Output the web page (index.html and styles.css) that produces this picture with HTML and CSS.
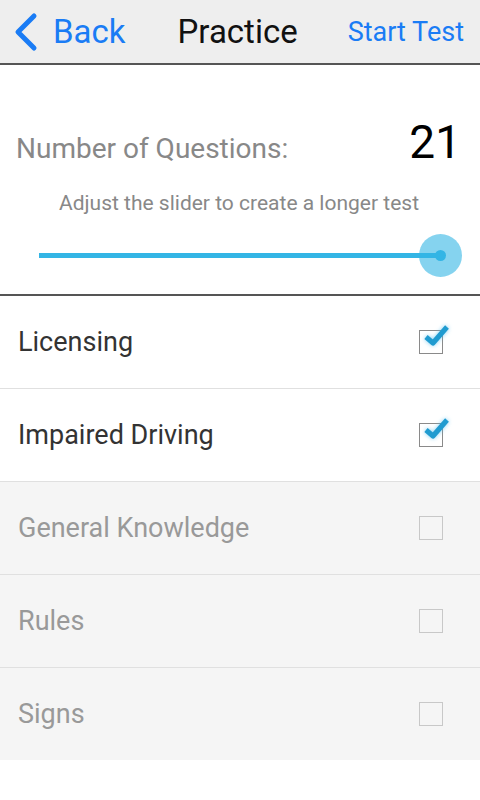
FILE: index.html
```html
<!DOCTYPE html>
<html lang="en">
<head>
    <meta charset="UTF-8">
    <meta name="viewport" content="width=device-width, initial-scale=1.0">
    <title>Practice</title>
    <link rel="stylesheet" href="styles.css">
</head>
<body>
    <div class="top-bar">
        <a class="back" href="#">
            <svg class="chevron" width="26" height="40" viewBox="0 0 26 40">
                <path d="M22 4 L6 20 L22 36" fill="none" stroke="#1a7cf5" stroke-width="5" stroke-linecap="round" stroke-linejoin="round"/>
            </svg>
            <span>Back</span>
        </a>
        <div class="title">Practice</div>
        <a class="start" href="#">Start Test</a>
    </div>

    <div class="count-box">
        <div class="count-row">
            <span class="count-label">Number of Questions:</span>
            <span class="count-value">21</span>
        </div>
        <p class="hint">Adjust the slider to create a longer test</p>
        <div class="slider">
            <div class="track"></div>
            <div class="thumb"><div class="dot"></div></div>
        </div>
    </div>

    <ul class="topics">
        <li class="topic">
            <span>Licensing</span>
            <span class="check on">
                <svg width="32" height="30" viewBox="0 0 32 30">
                    <path d="M6 16 L13 22 L27 6" fill="none" stroke="#1f9bd0" stroke-width="5" stroke-linejoin="round"/>
                </svg>
            </span>
        </li>
        <li class="topic">
            <span>Impaired Driving</span>
            <span class="check on">
                <svg width="32" height="30" viewBox="0 0 32 30">
                    <path d="M6 16 L13 22 L27 6" fill="none" stroke="#1f9bd0" stroke-width="5" stroke-linejoin="round"/>
                </svg>
            </span>
        </li>
        <li class="topic off">
            <span>General Knowledge</span>
            <span class="check"></span>
        </li>
        <li class="topic off">
            <span>Rules</span>
            <span class="check"></span>
        </li>
        <li class="topic off">
            <span>Signs</span>
            <span class="check"></span>
        </li>
    </ul>
</body>
</html>
```

FILE: styles.css
```css
body {
    margin: 0;
    width: 480px;
    background: #fff;
    font-family: Roboto, "Open Sans", sans-serif;
}

.top-bar {
    height: 63px;
    display: flex;
    align-items: center;
    justify-content: space-between;
    padding: 0 16px 0 12px;
    background: #eeeeee;
    border-bottom: 2px solid #555;
}

.back {
    display: flex;
    align-items: center;
    gap: 15px;
    color: #1a7cf5;
    font-size: 33px;
    text-decoration: none;
}

.title {
    font-size: 33px;
    color: #111;
    margin-left: 2px;
}

.start {
    color: #1a7cf5;
    font-size: 27px;
    text-decoration: none;
}

.count-box {
    padding: 50px 18px 0 16px;
    height: 179px;
    border-bottom: 2px solid #555;
}

.count-row {
    display: flex;
    justify-content: space-between;
    align-items: baseline;
}

.count-label {
    font-size: 28px;
    color: #888;
}

.count-value {
    font-size: 46px;
    color: #000;
    margin-right: 1px;
}

.hint {
    margin: 22px 0 0;
    text-align: center;
    font-size: 21px;
    color: #888;
}

.slider {
    position: relative;
    margin: 19px 0 0 23px;
    height: 44px;
}

.track {
    position: absolute;
    left: 0;
    right: 20px;
    top: 19px;
    height: 5px;
    background: #33b5e5;
}

.thumb {
    position: absolute;
    right: 0;
    top: 0;
    width: 43px;
    height: 43px;
    border-radius: 50%;
    background: rgba(51, 181, 229, 0.6);
    display: flex;
    align-items: center;
    justify-content: center;
}

.dot {
    width: 11px;
    height: 11px;
    border-radius: 50%;
    background: #33b5e5;
}

.topics {
    list-style: none;
    margin: 0;
    padding: 0;
}

.topic {
    height: 92px;
    display: flex;
    align-items: center;
    justify-content: space-between;
    padding: 0 37px 0 18px;
    border-bottom: 1px solid #e0e0e0;
    font-size: 27px;
    color: #333;
}

.topic.off {
    background: #f5f5f5;
    color: #999;
}

.topic:last-child {
    border-bottom: none;
}

.check {
    position: relative;
    width: 22px;
    height: 22px;
    border: 1px solid #c8c8c8;
}

.check.on {
    border-color: #8a8a8a;
}

.check svg {
    position: absolute;
    left: 0;
    top: -10px;
    filter: drop-shadow(0 0 2px rgba(80, 190, 240, 0.7));
}
```
